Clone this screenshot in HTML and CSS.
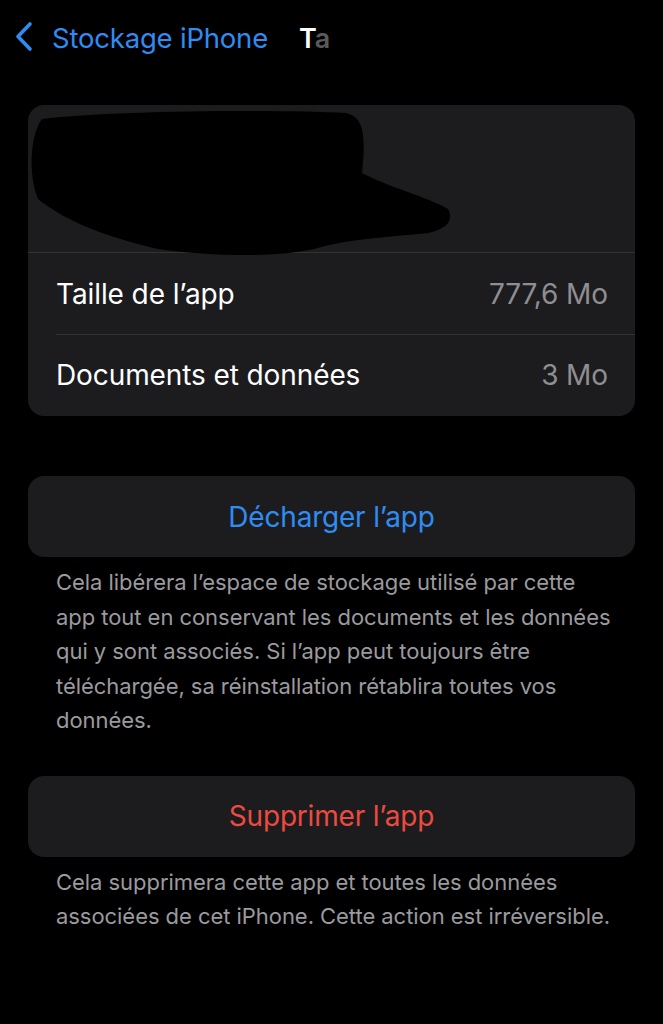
FILE: index.html
```html
<!doctype html>
<html>
<head>
<meta charset="utf-8">
<title>Taille</title>
<link rel="stylesheet" href="styles.css">
</head>
<body>
<div class="nav">
	<a class="back">
		<svg class="chev" width="22" height="32" viewBox="0 0 22 32"><path d="M16 3 L4 15.5 L16 28" fill="none" stroke="#2f8cf2" stroke-width="3.6" stroke-linecap="round" stroke-linejoin="round"/></svg>
		<span>Stockage iPhone</span>
	</a>
	<span class="title">T<span class="fade">a</span></span>
</div>

<div class="group">
	<div class="head">
		<svg class="blot" width="607" height="150" viewBox="0 0 607 150"><path d="M14 14 C80 6 240 4 318 8 C336 12 338 30 334 68 C360 82 400 92 420 104 C426 114 420 124 400 128 C360 132 320 134 286 144 C250 152 190 152 130 144 C80 132 40 118 10 94 C0 70 2 30 14 14 Z" fill="#000"/></svg>
	</div>
	<div class="row first"><span>Taille de l’app</span><span class="val">777,6 Mo</span></div>
	<div class="row"><span>Documents et données</span><span class="val">3 Mo</span></div>
</div>

<div class="btn blue">Décharger l’app</div>
<p class="note">Cela libérera l’espace de stockage utilisé par cette app tout en conservant les documents et les données qui y sont associés. Si l’app peut toujours être téléchargée, sa réinstallation rétablira toutes vos données.</p>

<div class="btn red">Supprimer l’app</div>
<p class="note">Cela supprimera cette app et toutes les données associées de cet iPhone. Cette action est irréversible.</p>
</body>
</html>
```
FILE: styles.css
```css
*{ margin:0; padding:0; box-sizing:border-box;}
body{ background:#000; width:663px; height:1024px; overflow:hidden; font-family:Inter,"Noto Sans",sans-serif; color:#fff; padding:0 28px;}
.nav{ height:76px; display:flex; align-items:center; margin:0 -28px; padding:0 0 0 14px; position:relative;}
.back{ display:flex; align-items:center; color:#2f8cf2; font-size:27.5px; letter-spacing:-0.2px;}
.back span{ margin-left:16px;}
.chev{ margin-top:-2px;}
.title{ margin-left:31px; font-size:27px; font-weight:600;}
.title .fade{ color:#5a5a5a;}
.group{ margin-top:29px; background:#1c1c1e; border-radius:16px; overflow:hidden;}
.head{ height:148px; border-bottom:1px solid #333336; position:relative;}
.blot{ display:block;}
.row{ height:82px; display:flex; align-items:center; justify-content:space-between; padding:0 27px 0 28px; font-size:28px; letter-spacing:-0.1px; position:relative;}
.row.first{ height:81px;}
.row + .row::before{ content:''; position:absolute; left:28px; right:0; top:0; border-top:1px solid #333336;}
.val{ color:#8e8e93;}
.btn{ height:81px; margin-top:60px; background:#1c1c1e; border-radius:16px; display:flex; align-items:center; justify-content:center; font-size:28px; letter-spacing:-0.2px;}
.blue{ color:#2f8cf2;}
.red{ color:#eb4b40;}
.note{ padding:8px 22px 0 28px; font-size:22px; line-height:34.5px; color:#9a9a9f; letter-spacing:-0.05px;}
.btn.red{ margin-top:38px;}
```
